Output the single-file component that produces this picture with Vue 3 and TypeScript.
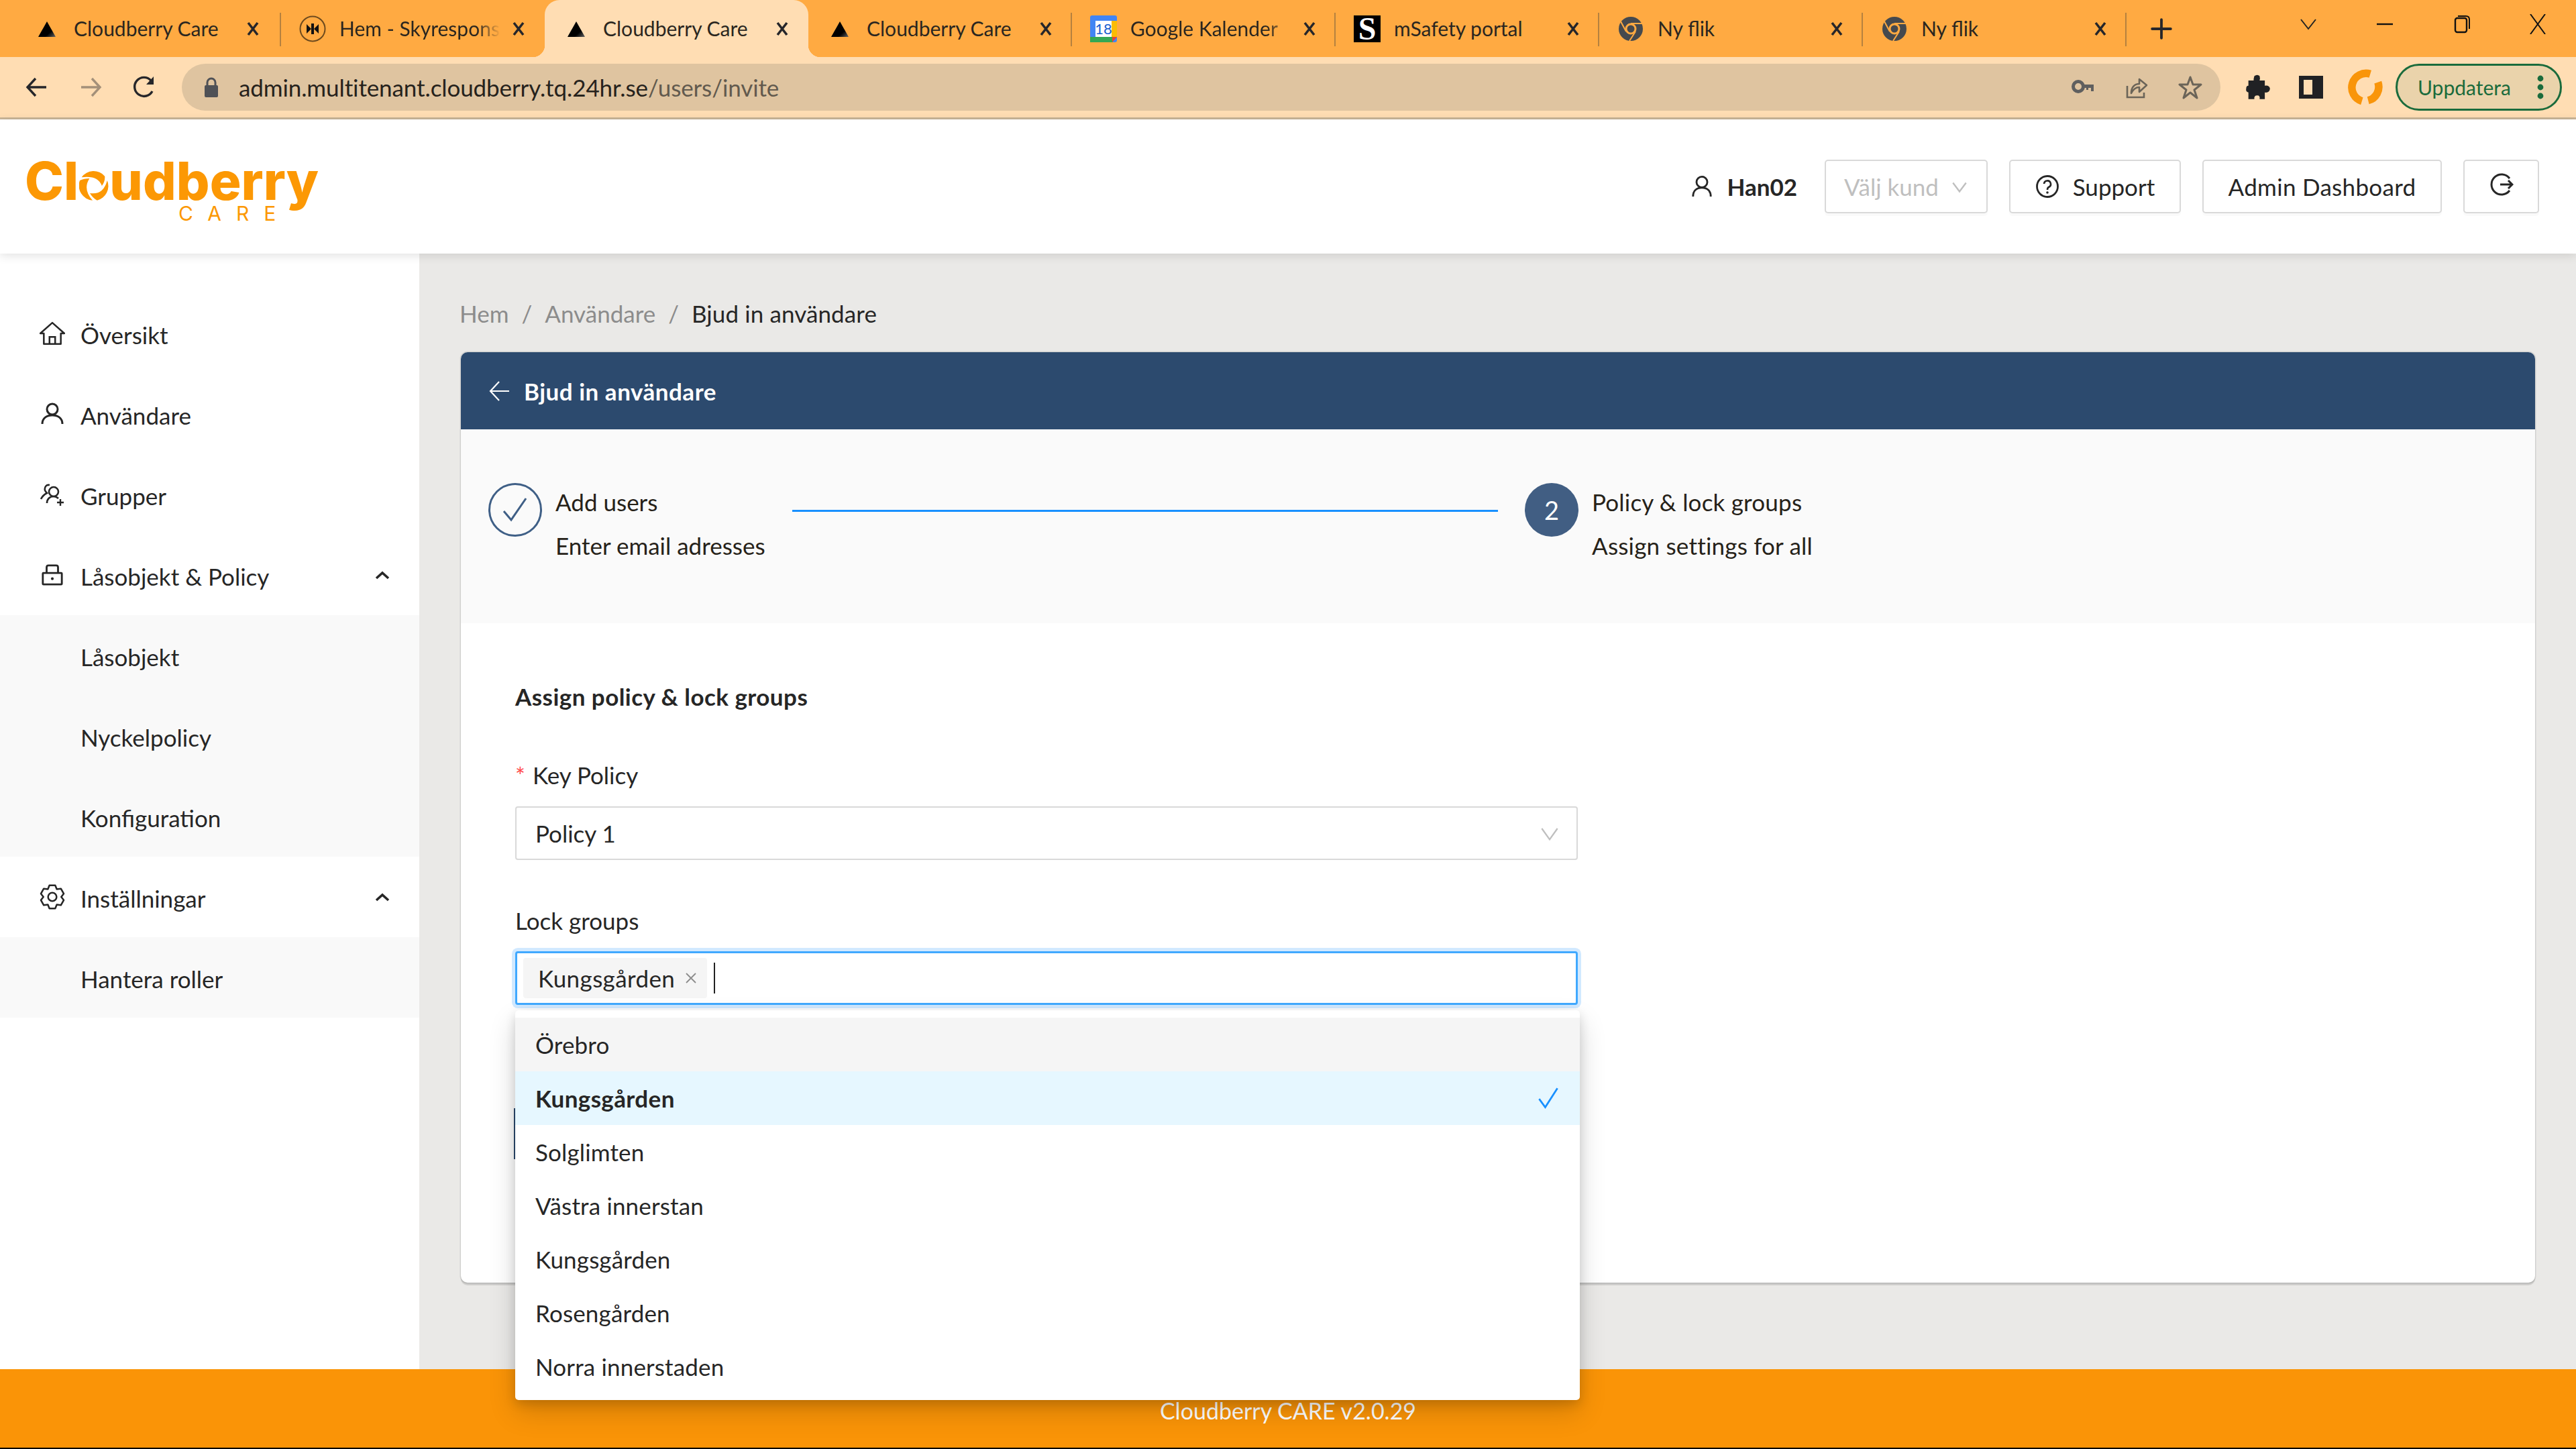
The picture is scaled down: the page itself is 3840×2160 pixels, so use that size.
<script setup lang="ts">
interface Tab { title: string; kind: string; active?: boolean; sep?: boolean; fade?: boolean }
const tabs: Tab[] = [
  { title: 'Cloudberry Care', kind: 'tri', sep: true },
  { title: 'Hem - Skyresponse', kind: 'sky', fade: true },
  { title: 'Cloudberry Care', kind: 'tri', active: true },
  { title: 'Cloudberry Care', kind: 'tri', sep: true },
  { title: 'Google Kalender', kind: 'cal', sep: true, fade: true },
  { title: 'mSafety portal', kind: 'saf', sep: true },
  { title: 'Ny flik', kind: 'chr', sep: true },
  { title: 'Ny flik', kind: 'chr', sep: true },
]
interface Item { label: string; icon?: string; sub?: boolean; open?: boolean }
const menu: Item[] = [
  { label: 'Översikt', icon: 'home' },
  { label: 'Användare', icon: 'user' },
  { label: 'Grupper', icon: 'group' },
  { label: 'Låsobjekt & Policy', icon: 'lock', open: true },
  { label: 'Låsobjekt', sub: true },
  { label: 'Nyckelpolicy', sub: true },
  { label: 'Konfiguration', sub: true },
  { label: 'Inställningar', icon: 'gear', open: true },
  { label: 'Hantera roller', sub: true },
]
const options = ['Örebro', 'Kungsgården', 'Solglimten', 'Västra innerstan', 'Kungsgården', 'Rosengården', 'Norra innerstaden']

function gear(): string {
  const pts: string[] = []
  const at = (deg: number, r: number): string => {
    const a = (deg * Math.PI) / 180
    return `${(18 + r * Math.cos(a)).toFixed(1)} ${(18 + r * Math.sin(a)).toFixed(1)}`
  }
  for (let i = 0; i < 6; i++) {
    const d = 60 * i - 90
    pts.push(at(d - 14, 16.8), at(d + 14, 16.8), at(d + 30, 12.6))
  }
  return 'M' + pts.join('L') + 'Z'
}
const gearPath = gear()
</script>

<template>
  <div class="page">
    <div class="tabstrip">
      <div
        v-for="(t, i) in tabs"
        :key="i"
        class="tab"
        :class="{ active: t.active, sep: t.sep }"
      >
        <span class="fav">
          <svg v-if="t.kind === 'tri'" viewBox="0 0 40 40" width="40" height="40">
            <defs>
              <linearGradient :id="'tg' + i" x1="0.3" y1="0.3" x2="1" y2="1">
                <stop offset="0.55" stop-color="#000" />
                <stop offset="1" stop-color="#666" />
              </linearGradient>
            </defs>
            <path d="M20 9 L33 32 H7Z" :fill="'url(#tg' + i + ')'" />
          </svg>
          <svg v-else-if="t.kind === 'sky'" viewBox="0 0 40 40" width="40" height="40">
            <circle cx="20" cy="20" r="18.5" fill="none" stroke="#6d4a1e" stroke-width="2" />
            <path d="M11 13 L18 20 L11 27Z M29 13 L22 20 L29 27Z" fill="#111" />
            <rect x="18" y="12" width="4" height="16" fill="#111" />
          </svg>
          <svg v-else-if="t.kind === 'cal'" viewBox="0 0 40 40" width="40" height="40">
            <rect width="40" height="40" rx="3" fill="#4285f4" />
            <rect x="32" y="8" width="8" height="24" fill="#fbbc04" />
            <rect y="32" width="34" height="8" fill="#34a853" />
            <path d="M33 32 H40 L33 40Z" fill="#ea4335" />
            <rect x="8" y="8" width="24" height="24" fill="#fff" />
            <text x="20" y="28" text-anchor="middle" class="cal-num">18</text>
          </svg>
          <span v-else-if="t.kind === 'saf'" class="saf">S</span>
          <svg v-else viewBox="0 0 40 40" width="40" height="40">
            <circle cx="20" cy="20" r="18" fill="#45494e" />
            <path d="M20 12 H37 M13 24 L5 9 M27 24 L18 38" stroke="#ffaa42" stroke-width="2" />
            <circle cx="20" cy="20" r="8.5" fill="#ffaa42" />
            <circle cx="20" cy="20" r="5.5" fill="#45494e" />
          </svg>
        </span>
        <span class="tab-title" :class="{ fade: t.fade }">{{ t.title }}</span>
        <svg class="tab-x" viewBox="0 0 24 24" width="24" height="24">
          <path d="M5 3 L19 21 M19 3 L5 21" stroke="#26262a" stroke-width="3.6" fill="none" />
        </svg>
      </div>
      <div class="plus">
        <svg viewBox="0 0 30 30" width="32" height="32">
          <path d="M15 2 V28 M2 15 H28" stroke="#26262a" stroke-width="3.6" stroke-linecap="round" />
        </svg>
      </div>
      <div class="winctl">
        <span class="wbtn">
          <svg viewBox="0 0 30 30" width="30" height="30"><path d="M4 8 L15 22 L26 8" fill="none" stroke="#222" stroke-width="2" /></svg>
        </span>
        <span class="wbtn">
          <svg viewBox="0 0 30 30" width="30" height="30"><path d="M3 15 H27" stroke="#111" stroke-width="2.4" /></svg>
        </span>
        <span class="wbtn">
          <svg viewBox="0 0 30 30" width="30" height="30"><rect x="6" y="6" width="17" height="21" rx="3" fill="none" stroke="#111" stroke-width="2.4" /><path d="M10 3 H22 Q27 3 27 8 V22" fill="none" stroke="#111" stroke-width="2" /></svg>
        </span>
        <span class="wbtn">
          <svg viewBox="0 0 30 30" width="30" height="30"><path d="M4 0 L26 30 M26 0 L4 30" fill="none" stroke="#111" stroke-width="2" /></svg>
        </span>
      </div>
    </div>

    <div class="toolbar">
      <span class="nav">
        <svg viewBox="0 0 36 36" width="36" height="36"><path d="M32 18 H5 M16 5 L4 18 L16 31" fill="none" stroke="#26262a" stroke-width="3.4" /></svg>
      </span>
      <span class="nav">
        <svg viewBox="0 0 36 36" width="36" height="36"><path d="M4 18 H31 M20 5 L32 18 L20 31" fill="none" stroke="#a49079" stroke-width="3.4" /></svg>
      </span>
      <span class="nav">
        <svg viewBox="0 0 36 36" width="36" height="36"><path d="M30 24 A14 14 0 1 1 28 8" fill="none" stroke="#26262a" stroke-width="3.4" /><path d="M32 2 V14 H21Z" fill="#26262a" /></svg>
      </span>
      <div class="omni">
        <svg class="lock" viewBox="0 0 24 32" width="24" height="32">
          <path d="M6 14 V9 A6 6 0 0 1 18 9 V14" fill="none" stroke="#4f5156" stroke-width="3" />
          <rect x="2" y="13" width="20" height="18" rx="2" fill="#4f5156" />
        </svg>
        <span class="url">admin.multitenant.cloudberry.tq.24hr.se<span class="url-path">/users/invite</span></span>
        <div class="omni-right">
          <span class="nav">
            <svg viewBox="0 0 36 36" width="36" height="36"><circle cx="11" cy="17" r="7.5" fill="none" stroke="#5f5f5f" stroke-width="5" /><path d="M17 14 H34 V24 H30 V19 H26 V22 H23 V19 H17Z" fill="#5f5f5f" /></svg>
          </span>
          <span class="nav">
            <svg viewBox="0 0 36 36" width="36" height="36"><path d="M4 16 V33 H29 V26" fill="none" stroke="#6b6458" stroke-width="2.6" /><path d="M10 27 C10 18 15 13 22 13 V6 L33 15 L22 25 V18 C17 18 13 21 10 27Z" fill="none" stroke="#6b6458" stroke-width="2.6" stroke-linejoin="round" /></svg>
          </span>
          <span class="nav">
            <svg viewBox="0 0 36 36" width="36" height="36"><path d="M18 3 L22 14 L34 14 L24 22 L28 34 L18 26 L8 34 L12 22 L2 14 L14 14Z" fill="none" stroke="#6b6458" stroke-width="3" stroke-linejoin="round" /></svg>
          </span>
        </div>
      </div>
      <div class="ext">
        <span class="nav">
          <svg viewBox="0 0 36 36" width="40" height="40"><path d="M14 3 Q18 0 21 3 Q22 6 21 9 H28 V16 Q34 15 35 20 Q34 26 28 25 V34 H21 Q22 29 18 29 Q13 29 14 34 H6 V25 Q2 24 3 20 Q3 16 6 16 V9 H13 Q13 6 14 3Z" fill="#202124" /></svg>
        </span>
        <span class="nav">
          <svg viewBox="0 0 36 36" width="36" height="36"><path fill-rule="evenodd" d="M0 1 H36 V35 H0Z M7 7 V29 H20 V7Z" fill="#202124" /></svg>
        </span>
        <span class="nav">
          <svg viewBox="0 0 52 52" width="54" height="54">
            <path d="M34 7 A20 20 0 0 0 22 46" fill="none" stroke="#f9950a" stroke-width="11" />
            <path d="M45 19 A20 20 0 0 1 31 45" fill="none" stroke="#f9950a" stroke-width="11" />
          </svg>
        </span>
      </div>
      <div class="update">
        <span>Uppdatera</span>
        <svg viewBox="0 0 10 36" width="10" height="36"><circle cx="5" cy="5" r="4.4" fill="#1a6b3c" /><circle cx="5" cy="18" r="4.4" fill="#1a6b3c" /><circle cx="5" cy="31" r="4.4" fill="#1a6b3c" /></svg>
      </div>
    </div>

    <header class="head">
      <div class="logo">
        <div class="logo-word">
          <span>Cl</span>
          <svg class="logo-o" viewBox="0 0 44 44" width="44" height="44">
            <path d="M3.6 9.3 A22 22 0 0 1 38.2 7.7 Q39 15 33.9 22 Q28 6 3.6 9.3Z" fill="#fc9804" />
            <path d="M41.8 14 A22 22 0 0 1 26.8 43.7 Q20 40 16 33 Q36 36 41.8 14Z" fill="#fc9804" />
            <path d="M1 14 Q7 11 15.4 11 Q5 27 20 43.7 A22 22 0 0 1 1 14Z" fill="#fc9804" />
          </svg>
          <span>udberry</span>
        </div>
        <div class="logo-care">CARE</div>
      </div>
      <div class="head-right">
        <div class="who">
          <svg viewBox="0 0 36 36" width="34" height="34"><circle cx="18" cy="11" r="8.5" fill="none" stroke="#262626" stroke-width="3" /><path d="M4 34 C4 24 10 20 18 20 S32 24 32 34" fill="none" stroke="#262626" stroke-width="3" /></svg>
          <span>Han02</span>
        </div>
        <div class="btn pick">
          <span>Välj kund</span>
          <svg viewBox="0 0 24 24" width="26" height="26"><path d="M3 7 L12 19 L21 7" fill="none" stroke="#bfbfbf" stroke-width="2.2" /></svg>
        </div>
        <div class="btn support">
          <svg viewBox="0 0 36 36" width="36" height="36"><circle cx="18" cy="18" r="15.5" fill="none" stroke="#262626" stroke-width="2.8" /><path d="M13 14 A5 5 0 1 1 20 19 Q18 20 18 23" fill="none" stroke="#262626" stroke-width="2.6" /><circle cx="18" cy="27" r="1.8" fill="#262626" /></svg>
          <span>Support</span>
        </div>
        <div class="btn admin">Admin Dashboard</div>
        <div class="btn out">
          <svg viewBox="0 0 36 36" width="36" height="36"><path d="M30 9 A15 15 0 1 0 30 27" fill="none" stroke="#262626" stroke-width="3" /><path d="M16 18 H34 M28 12 L34 18 L28 24" fill="none" stroke="#262626" stroke-width="3" /></svg>
        </div>
      </div>
    </header>

    <div class="body">
      <aside class="side">
        <div v-for="m in menu" :key="m.label" class="item" :class="{ sub: m.sub }">
          <span v-if="!m.sub" class="item-ic">
            <svg v-if="m.icon === 'home'" viewBox="0 0 36 36" width="38" height="38"><path d="M1 18 L18 3 L35 18 H30 V33 H6 V18Z" fill="none" stroke="#262626" stroke-width="2.4" stroke-linejoin="round" /><path d="M14 33 V23 H22 V33" fill="none" stroke="#262626" stroke-width="2.4" /></svg>
            <svg v-else-if="m.icon === 'user'" viewBox="0 0 36 36" width="36" height="36"><circle cx="18" cy="11" r="8" fill="none" stroke="#262626" stroke-width="3" /><path d="M3 33 C3 24 10 20 18 20 S33 24 33 33" fill="none" stroke="#262626" stroke-width="3" /></svg>
            <svg v-else-if="m.icon === 'group'" viewBox="0 0 36 36" width="36" height="36"><circle cx="20" cy="14" r="7" fill="none" stroke="#262626" stroke-width="2.6" /><path d="M10 31 C10 25 14 21 20 21 C23 21 25 22 27 24" fill="none" stroke="#262626" stroke-width="2.6" /><path d="M14 4 C9 3 6 7 7 12 C8 14 9 15 10 16 C6 18 3 21 1 25" fill="none" stroke="#262626" stroke-width="2.6" /><path d="M30 25 V35 M25 30 H35" stroke="#262626" stroke-width="2.4" /></svg>
            <svg v-else-if="m.icon === 'lock'" viewBox="0 0 36 36" width="34" height="34"><rect x="3" y="15" width="30" height="18" rx="1" fill="none" stroke="#262626" stroke-width="3" /><path d="M9 15 V6 Q9 3 12 3 H24 Q27 3 27 6 V15" fill="none" stroke="#262626" stroke-width="3" /><circle cx="18" cy="24" r="2.2" fill="#262626" /></svg>
            <svg v-else viewBox="0 0 36 36" width="38" height="38"><path :d="gearPath" fill="none" stroke="#262626" stroke-width="2.4" stroke-linejoin="round" /><circle cx="18" cy="18" r="6" fill="none" stroke="#262626" stroke-width="2.4" /></svg>
          </span>
          <span class="item-label">{{ m.label }}</span>
          <svg v-if="m.open" class="item-chev" viewBox="0 0 24 14" width="24" height="14"><path d="M3 12 L12 4 L21 12" fill="none" stroke="#262626" stroke-width="3.6" /></svg>
        </div>
      </aside>

      <main class="main">
        <nav class="crumbs">
          <span>Hem</span><i>/</i><span>Användare</span><i>/</i><span class="now">Bjud in användare</span>
        </nav>
        <section class="card">
          <div class="card-head">
            <svg viewBox="0 0 32 32" width="32" height="32"><path d="M30 16 H3 M15 2 L2 16 L15 30" fill="none" stroke="#fff" stroke-width="2.2" /></svg>
            <span>Bjud in användare</span>
          </div>
          <div class="steps">
            <span class="dot done">
              <svg viewBox="0 0 40 40" width="40" height="40"><path d="M3 22 L14 35 L36 3" fill="none" stroke="#3f5f86" stroke-width="3" /></svg>
            </span>
            <div class="step-text first">
              <div>Add users</div>
              <div>Enter email adresses</div>
            </div>
            <div class="step-line"></div>
            <span class="dot cur">2</span>
            <div class="step-text second">
              <div>Policy &amp; lock groups</div>
              <div>Assign settings for all</div>
            </div>
          </div>
          <div class="form">
            <h2 class="form-title">Assign policy &amp; lock groups</h2>
            <label class="lab first"><span class="req">*</span>Key Policy</label>
            <div class="select">
              <span>Policy 1</span>
              <svg viewBox="0 0 24 24" width="28" height="28"><path d="M2 6 L12 20 L22 6" fill="none" stroke="#bfbfbf" stroke-width="2" /></svg>
            </div>
            <label class="lab">Lock groups</label>
            <div class="multi">
              <div class="field">
                <span class="chip">
                  <span>Kungsgården</span>
                  <svg viewBox="0 0 20 20" width="20" height="20"><path d="M3 3 L17 17 M17 3 L3 17" stroke="#8c8c8c" stroke-width="1.8" /></svg>
                </span>
                <span class="caret"></span>
              </div>
              <div class="drop">
                <div
                  v-for="(o, i) in options"
                  :key="i"
                  class="opt"
                  :class="{ hover: i === 0, sel: i === 1 }"
                >
                  <span>{{ o }}</span>
                  <svg v-if="i === 1" viewBox="0 0 30 30" width="34" height="34"><path d="M3 16 L11 27 L27 2" fill="none" stroke="#1890ff" stroke-width="2.4" /></svg>
                </div>
              </div>
            </div>
            <div class="behind"></div>
          </div>
        </section>
      </main>
    </div>

    <footer class="foot">Cloudberry CARE v2.0.29</footer>
  </div>
</template>

<style>
html, body { margin: 0; background: #000; }
</style>

<style scoped>
.page {
  width: 3840px;
  height: 2160px;
  overflow: hidden;
  background: #000;
  display: flex;
  flex-direction: column;
  font-family: "Lato", "Open Sans", sans-serif;
  font-size: 35px;
  color: #262626;
}

/* tab strip */
.tabstrip {
  height: 85px;
  flex: none;
  display: flex;
  padding-left: 23px;
  background: #ffaa42;
  color: #2a2620;
}
.tab {
  flex: 0 0 393px;
  min-width: 0;
  height: 85px;
  box-sizing: border-box;
  display: flex;
  align-items: center;
  padding: 0 24px 0 27px;
  position: relative;
  font-size: 30px;
}
.tab:first-child { flex-basis: 396px; padding-right: 27px; }
.tab.sep::after {
  content: "";
  position: absolute;
  right: 0;
  top: 19px;
  height: 50px;
  width: 2px;
  background: #b5813f;
}
.tab.active {
  background: #ffddb3;
  border-radius: 22px 22px 0 0;
}
.tab.active::before,
.tab.active::after {
  content: "";
  position: absolute;
  bottom: 0;
  width: 18px;
  height: 18px;
}
.tab.active::before {
  left: -18px;
  background: radial-gradient(circle at 0 0, transparent 18px, #ffddb3 18.5px);
}
.tab.active::after {
  right: -18px;
  background: radial-gradient(circle at 100% 0, transparent 18px, #ffddb3 18.5px);
}
.fav {
  flex: 0 0 40px;
  height: 40px;
  display: flex;
  margin-right: 20px;
}
.saf {
  width: 40px;
  height: 40px;
  background: #000;
  color: #fff;
  font: bold 48px/40px "Liberation Serif", serif;
  text-align: center;
}
.cal-num { font: 22px "Lato", sans-serif; fill: #1a5fd0; }
.tab-title {
  flex: 1;
  min-width: 0;
  white-space: nowrap;
  overflow: hidden;
  margin-right: 12px;
  padding-bottom: 2px;
}
.tab-title.fade {
  -webkit-mask-image: linear-gradient(90deg, #000 85%, transparent 100%);
  mask-image: linear-gradient(90deg, #000 85%, transparent 100%);
}
.tab-x { flex: none; margin: 0 3px; }
.plus {
  flex: 0 0 104px;
  display: flex;
  align-items: center;
  justify-content: center;
}
.winctl {
  margin-left: auto;
  display: flex;
  height: 72px;
}
.wbtn {
  width: 114px;
  display: flex;
  align-items: center;
  justify-content: center;
}

/* toolbar */
.toolbar {
  height: 93px;
  flex: none;
  box-sizing: border-box;
  display: flex;
  align-items: flex-start;
  padding: 10px 0 0 15px;
  background: #ffddb3;
  border-bottom: 3px solid #c9b598;
}
.nav {
  flex: 0 0 80px;
  height: 70px;
  display: flex;
  align-items: center;
  justify-content: center;
}
.omni {
  flex: 0 0 3039px;
  height: 70px;
  box-sizing: border-box;
  margin-left: 16px;
  padding: 0 5px 0 32px;
  border-radius: 35px;
  background: #dfc4a0;
  display: flex;
  align-items: center;
}
.lock { flex: none; margin-right: 29px; }
.url { font-size: 35px; letter-spacing: -0.1px; color: #26221c; white-space: nowrap; }
.url-path { color: #625a4e; }
.omni-right { margin-left: auto; display: flex; }
.ext { display: flex; margin-left: 15px; }
.update {
  flex: 0 0 248px;
  height: 70px;
  box-sizing: border-box;
  margin-left: 6px;
  border: 3px solid #1a6b3c;
  border-radius: 35px;
  background: #ead3ab;
  color: #1a6b3c;
  font-size: 30px;
  display: flex;
  align-items: center;
  padding: 0 24px 0 30px;
  justify-content: space-between;
}

/* header */
.head {
  height: 200px;
  flex: none;
  position: relative;
  z-index: 2;
  display: flex;
  align-items: center;
  background: #fff;
  box-shadow: 0 3px 14px rgba(0, 0, 0, 0.12);
  padding: 0 55px 0 37px;
}
.logo {
  display: flex;
  flex-direction: column;
  align-items: flex-start;
  color: #fc9804;
  width: 440px;
  margin-top: 7px;
}
.logo-word {
  display: flex;
  align-items: baseline;
  font-family: "Inter", sans-serif;
  font-weight: 800;
  font-size: 78px;
  line-height: 72px;
  letter-spacing: 0.1px;
}
.logo-o { align-self: baseline; margin: 0 1px 0 1px; position: relative; top: 1px; }
.logo-care {
  margin: 1px 0 0 229px;
  font-family: "Inter", sans-serif;
  font-size: 30px;
  line-height: 22px;
  letter-spacing: 22px;
  white-space: nowrap;
}
.head-right {
  margin-left: auto;
  display: flex;
  align-items: center;
  gap: 32px;
}
.who {
  display: flex;
  align-items: center;
  gap: 20px;
  font-weight: 700;
  margin-right: 9px;
}
.btn {
  height: 80px;
  box-sizing: border-box;
  border: 2px solid #d9d9d9;
  border-radius: 5px;
  background: #fff;
  box-shadow: 0 4px 0 rgba(0, 0, 0, 0.02);
  display: flex;
  align-items: center;
  justify-content: center;
}
.pick { width: 243px; color: #bfbfbf; gap: 18px; }
.support { width: 256px; gap: 20px; }
.admin { width: 357px; letter-spacing: 0.3px; }
.out { width: 113px; padding-bottom: 6px; }

/* body */
.body {
  height: 1663px;
  flex: none;
  display: flex;
}
.side {
  flex: 0 0 625px;
  background: #fff;
  padding-top: 59px;
}
.item {
  height: 120px;
  display: flex;
  align-items: center;
  padding: 0 43px 0 58px;
  background: #fff;
}
.item.sub { background: #f9f9f9; padding-left: 120px; }
.item-ic { flex: 0 0 40px; display: flex; justify-content: center; margin-right: 22px; }
.item-label { padding-top: 3px; }
.item-chev { margin-left: auto; }

.main {
  flex: 1;
  background: #eae9e7;
  padding: 0 61px 0 62px;
}
.crumbs {
  height: 147px;
  box-sizing: border-box;
  padding-top: 30px;
  margin-left: -2px;
  display: flex;
  align-items: center;
  color: #8c8c8c;
}
.crumbs i { font-style: normal; margin: 0 19px; }
.crumbs .now { color: #262626; letter-spacing: 0.1px; }

.card {
  height: 1387px;
  background: #fff;
  border-radius: 10px;
  box-shadow: 0 4px 1px rgba(0, 0, 0, 0.12), 0 0 0 1.5px rgba(0, 0, 0, 0.09);
}
.card-head {
  height: 115px;
  box-sizing: border-box;
  background: #2c4a6e;
  border-radius: 10px 10px 0 0;
  color: #fff;
  font-weight: 700;
  letter-spacing: 0.5px;
  display: flex;
  align-items: center;
  padding-left: 42px;
  gap: 20px;
}
.steps {
  height: 289px;
  box-sizing: border-box;
  background: #fafafa;
  padding: 80px 0 0 41px;
  display: flex;
  align-items: flex-start;
}
.dot {
  flex: 0 0 80px;
  height: 80px;
  box-sizing: border-box;
  border-radius: 50%;
  display: flex;
  align-items: center;
  justify-content: center;
}
.dot.done { border: 3px solid #3f5f86; }
.dot.cur { background: #415e83; color: #fff; font-size: 38px; }
.step-text {
  margin: -4px 0 0 20px;
  line-height: 65px;
  white-space: nowrap;
  color: #262219;
}
.step-text.first { width: 353px; flex: none; }
.step-text.second { letter-spacing: 0.2px; }
.step-line {
  flex: 0 0 1052px;
  height: 3px;
  margin: 40px 40px 0 0;
  background: #1890ff;
}

.form { padding: 84px 0 0 81px; width: 1584px; }
.form-title {
  margin: 0;
  font-size: 35px;
  font-weight: 700;
  letter-spacing: 0.45px;
  line-height: 50px;
}
.lab {
  display: block;
  margin-top: 65px;
  line-height: 50px;
}
.lab.first { margin-top: 67px; }
.req { color: #ff4d4f; margin-right: 11px; }
.select {
  margin-top: 22px;
  height: 80px;
  box-sizing: border-box;
  border: 2px solid #d9d9d9;
  border-radius: 4px;
  background: #fff;
  display: flex;
  align-items: center;
  justify-content: space-between;
  padding: 0 26px 0 28px;
}
.multi { position: relative; margin-top: 21px; }
.field {
  height: 80px;
  box-sizing: border-box;
  border: 3px solid #40a9ff;
  border-radius: 4px;
  box-shadow: 0 0 0 5px rgba(24, 144, 255, 0.2);
  background: #fff;
  display: flex;
  align-items: center;
  padding-left: 9px;
}
.chip {
  height: 60px;
  box-sizing: border-box;
  padding: 0 14px 0 22px;
  border-radius: 4px;
  background: #f5f5f5;
  display: flex;
  align-items: center;
  gap: 14px;
  letter-spacing: 0.4px;
}
.caret {
  width: 2px;
  height: 46px;
  margin-left: 10px;
  background: #222;
}
.drop {
  position: absolute;
  z-index: 3;
  left: 0;
  top: 88px;
  width: 1587px;
  box-sizing: border-box;
  padding: 11px 0 10px;
  border-radius: 5px;
  background: #fff;
  box-shadow: 0 18px 40px rgba(0, 0, 0, 0.16), 0 6px 16px rgba(0, 0, 0, 0.14);
}
.opt {
  height: 80px;
  box-sizing: border-box;
  display: flex;
  align-items: center;
  justify-content: space-between;
  padding: 0 30px;
  letter-spacing: 0.15px;
}
.opt.hover { background: #f5f5f5; }
.opt.sel { background: #e6f7ff; font-weight: 700; letter-spacing: 0.4px; }
.behind {
  margin-top: 154px;
  width: 300px;
  height: 76px;
  margin-left: -2px;
  background: #2c4a6e;
}

.foot {
  height: 117px;
  flex: none;
  box-sizing: border-box;
  padding-top: 40px;
  background: #fa9407;
  color: #fff;
  text-align: center;
  font-size: 34px;
  line-height: 44px;
}
</style>
